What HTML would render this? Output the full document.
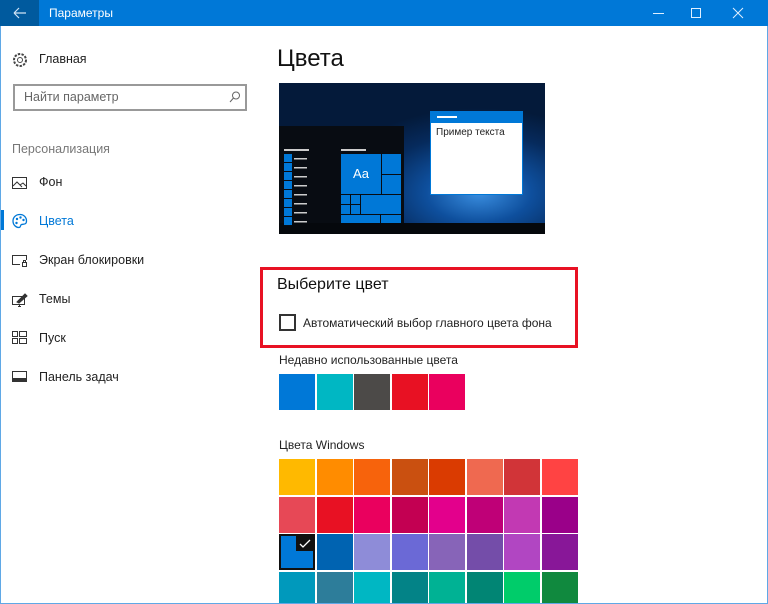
<!DOCTYPE html>
<html><head><meta charset="utf-8"><style>
*{margin:0;padding:0;box-sizing:border-box}
html,body{width:768px;height:604px;overflow:hidden}
body{background:#fff;font-family:"Liberation Sans","Noto Sans CJK SC",sans-serif;position:relative;color:#000}
.a{position:absolute}
.t{font-size:12.5px;white-space:nowrap}
.sw{position:absolute;width:36px;height:36px}
.ic{position:absolute;left:12px}
</style></head><body>
<div class="a" style="left:0;top:0;width:768px;height:26px;background:#0078d7"></div>
<div class="a" style="left:0;top:0;width:39px;height:26px;background:#005a9e"></div>
<svg class="a" style="left:12px;top:6px" width="16" height="14"><path d="M2 7H14M2 7L7 2M2 7L7 12" stroke="#cfe3f5" stroke-width="1.2" fill="none"/></svg>
<div class="a t" style="left:49px;top:6px;color:#fff;font-size:12px">Параметры</div>
<svg class="a" style="left:650px;top:6px" width="110" height="14"><path d="M3 7.5H14" stroke="#dfefff"/><rect x="41.5" y="2.5" width="9" height="9" stroke="#dfefff" fill="none"/><path d="M83 2L93 12M93 2L83 12" stroke="#dfefff"/></svg>

<svg class="a" style="left:12px;top:52px" width="16" height="16"><circle cx="8" cy="8" r="2.5" stroke="#444" fill="none"/><circle cx="8" cy="8" r="6" stroke="#444" stroke-dasharray="2.4 1.3" stroke-width="2" fill="none"/></svg>
<div class="a t" style="left:39px;top:52px;color:#222">Главная</div>
<div class="a" style="left:13px;top:84px;width:234px;height:27px;border:2px solid #999"></div>
<div class="a t" style="left:24px;top:90px;color:#666">Найти параметр</div>
<svg class="a" style="left:228px;top:90px" width="14" height="14"><circle cx="8" cy="5.5" r="3.5" stroke="#666" fill="none"/><path d="M5.5 8L2 12" stroke="#666"/></svg>
<div class="a t" style="left:12px;top:142px;color:#777">Персонализация</div>

<svg class="ic a" style="top:176px" width="16" height="14"><rect x="0.5" y="1.5" width="14" height="11" stroke="#333" fill="none"/><path d="M1 10L5 6L10 11M8 9L11 7L14 10" stroke="#333" fill="none"/></svg>
<div class="a t" style="left:39px;top:175px;color:#222">Фон</div>
<div class="a" style="left:0;top:210px;width:4px;height:20px;background:#0078d7"></div>
<svg class="ic a" style="top:213px" width="16" height="16"><path d="M8 1.5C3.5 1.5 1 4.5 1 8C1 12 4 14.5 7 14.5C9 14.5 8 12 9.5 11.5C11 11 14.5 12 14.5 8C14.5 4.5 12 1.5 8 1.5Z" stroke="#0078d7" stroke-width="1.3" fill="none"/><circle cx="5" cy="6" r="1.2" fill="#0078d7"/><circle cx="8.5" cy="4.5" r="1.2" fill="#0078d7"/><circle cx="11.5" cy="7" r="1.2" fill="#0078d7"/><circle cx="4.5" cy="10" r="1.2" fill="#0078d7"/></svg>
<div class="a t" style="left:39px;top:214px;color:#0078d7">Цвета</div>
<svg class="ic a" style="top:254px" width="16" height="14"><path d="M14.5 6V1.5H0.5V10.5H8" stroke="#333" fill="none"/><rect x="10.5" y="8.5" width="4" height="4" stroke="#333" fill="none"/><path d="M11.5 8.5V6.5H13.5V8.5" stroke="#333" fill="none"/></svg>
<div class="a t" style="left:39px;top:253px;color:#222">Экран блокировки</div>
<svg class="ic a" style="top:292px" width="16" height="16"><rect x="0.5" y="4.5" width="12" height="8" stroke="#333" fill="none"/><path d="M6 14.5H9M7.5 12.5V14.5M5 10L13 2L15 4L7 11Z" stroke="#333" fill="#333"/></svg>
<div class="a t" style="left:39px;top:292px;color:#222">Темы</div>
<svg class="ic a" style="top:331px" width="16" height="14"><rect x="0.5" y="0.5" width="5" height="5" stroke="#333" fill="none"/><rect x="7.5" y="0.5" width="7" height="5" stroke="#333" fill="none"/><rect x="0.5" y="7.5" width="5" height="5" stroke="#333" fill="none"/><rect x="7.5" y="7.5" width="7" height="5" stroke="#333" fill="none"/></svg>
<div class="a t" style="left:39px;top:331px;color:#222">Пуск</div>
<svg class="ic a" style="top:371px" width="16" height="12"><rect x="0.5" y="0.5" width="14" height="10" stroke="#333" fill="none"/><rect x="1" y="7" width="13" height="3" fill="#333"/></svg>
<div class="a t" style="left:39px;top:370px;color:#222">Панель задач</div>

<div class="a" style="left:277px;top:45px;font-size:24px;color:#111">Цвета</div>

<div class="a" style="left:279px;top:83px;width:266px;height:151px;background:radial-gradient(ellipse 150px 85px at 200px 110px,#3a8ee0 0%,#0e4f9d 35%,#062a5c 70%,#041a3a 100%);overflow:hidden">
 <div class="a" style="left:0;top:43px;width:125px;height:100px;background:#080c12"></div>
 <div class="a" style="left:0;top:140px;width:266px;height:11px;background:#05080c"></div>
 <div class="a" style="left:5px;top:66px;width:25px;height:2px;background:#ccc"></div>
 <div class="a" style="left:62px;top:66px;width:25px;height:2px;background:#ccc"></div>
 <div class="a" style="left:5px;top:71px;width:8px;height:72px;background:repeating-linear-gradient(#0078d7 0 8px,#080c12 8px 9px)"></div>
 <div class="a" style="left:15px;top:75px;width:13px;height:66px;background:repeating-linear-gradient(#ccc 0 1.5px,transparent 1.5px 9px)"></div>
 <div class="a" style="left:62px;top:71px;width:40px;height:40px;background:#0078d7;color:#fff;font-size:13px;text-align:center;line-height:40px">Aa</div>
 <div class="a" style="left:103px;top:71px;width:19px;height:20px;background:#0078d7"></div>
 <div class="a" style="left:103px;top:92px;width:19px;height:19px;background:#0078d7"></div>
 <div class="a" style="left:62px;top:112px;width:9px;height:9px;background:#0078d7"></div>
 <div class="a" style="left:72px;top:112px;width:9px;height:9px;background:#0078d7"></div>
 <div class="a" style="left:62px;top:122px;width:9px;height:9px;background:#0078d7"></div>
 <div class="a" style="left:72px;top:122px;width:9px;height:9px;background:#0078d7"></div>
 <div class="a" style="left:82px;top:112px;width:40px;height:19px;background:#0078d7"></div>
 <div class="a" style="left:62px;top:132px;width:39px;height:8px;background:#0078d7"></div>
 <div class="a" style="left:102px;top:132px;width:20px;height:8px;background:#0078d7"></div>
 <div class="a" style="left:151px;top:28px;width:93px;height:84px;background:#fff;border:1px solid #0078d7"></div>
 <div class="a" style="left:151px;top:28px;width:93px;height:12px;background:#0078d7"></div>
 <div class="a" style="left:158px;top:33px;width:20px;height:2px;background:#fff"></div>
 <div class="a" style="left:157px;top:44px;font-size:10px;color:#222;white-space:nowrap">Пример текста</div>
</div>

<div class="a" style="left:260px;top:267px;width:318px;height:81px;border:3px solid #e81123"></div>
<div class="a" style="left:277px;top:276px;font-size:16px;color:#111">Выберите цвет</div>
<div class="a" style="left:279px;top:314px;width:17px;height:17px;border:2px solid #333"></div>
<div class="a t" style="left:303px;top:316px;color:#222;font-size:12px">Автоматический выбор главного цвета фона</div>
<div class="a t" style="left:279px;top:353px;color:#222;font-size:12px">Недавно использованные цвета</div>
<div class="sw" style="left:279px;top:374px;background:#0078d7"></div>
<div class="sw" style="left:317px;top:374px;background:#00b7c3"></div>
<div class="sw" style="left:354px;top:374px;background:#4c4a48"></div>
<div class="sw" style="left:392px;top:374px;background:#e81123"></div>
<div class="sw" style="left:429px;top:374px;background:#ea005e"></div>
<div class="a t" style="left:279px;top:438px;color:#222;font-size:12px">Цвета Windows</div>

<div class="sw" style="left:279px;top:459px;background:#ffb900"></div>
<div class="sw" style="left:317px;top:459px;background:#ff8c00"></div>
<div class="sw" style="left:354px;top:459px;background:#f7630c"></div>
<div class="sw" style="left:392px;top:459px;background:#ca5010"></div>
<div class="sw" style="left:429px;top:459px;background:#da3b01"></div>
<div class="sw" style="left:467px;top:459px;background:#ef6950"></div>
<div class="sw" style="left:504px;top:459px;background:#d13438"></div>
<div class="sw" style="left:542px;top:459px;background:#ff4343"></div>

<div class="sw" style="left:279px;top:497px;background:#e74856"></div>
<div class="sw" style="left:317px;top:497px;background:#e81123"></div>
<div class="sw" style="left:354px;top:497px;background:#ea005e"></div>
<div class="sw" style="left:392px;top:497px;background:#c30052"></div>
<div class="sw" style="left:429px;top:497px;background:#e3008c"></div>
<div class="sw" style="left:467px;top:497px;background:#bf0077"></div>
<div class="sw" style="left:504px;top:497px;background:#c239b3"></div>
<div class="sw" style="left:542px;top:497px;background:#9a0089"></div>

<div class="sw" style="left:279px;top:534px;background:#0078d7;border:2px solid #111"></div>
<div class="a" style="left:296px;top:536px;width:17px;height:15px;background:#111"></div>
<svg class="a" style="left:298px;top:538px" width="14" height="11"><path d="M2 6L5 9L12 2" stroke="#fff" stroke-width="1.3" fill="none"/></svg>
<div class="sw" style="left:317px;top:534px;background:#0063b1"></div>
<div class="sw" style="left:354px;top:534px;background:#8e8cd8"></div>
<div class="sw" style="left:392px;top:534px;background:#6b69d6"></div>
<div class="sw" style="left:429px;top:534px;background:#8764b8"></div>
<div class="sw" style="left:467px;top:534px;background:#744da9"></div>
<div class="sw" style="left:504px;top:534px;background:#b146c2"></div>
<div class="sw" style="left:542px;top:534px;background:#881798"></div>

<div class="sw" style="left:279px;top:572px;height:31px;background:#0099bc"></div>
<div class="sw" style="left:317px;top:572px;height:31px;background:#2d7d9a"></div>
<div class="sw" style="left:354px;top:572px;height:31px;background:#00b7c3"></div>
<div class="sw" style="left:392px;top:572px;height:31px;background:#038387"></div>
<div class="sw" style="left:429px;top:572px;height:31px;background:#00b294"></div>
<div class="sw" style="left:467px;top:572px;height:31px;background:#018574"></div>
<div class="sw" style="left:504px;top:572px;height:31px;background:#00cc6a"></div>
<div class="sw" style="left:542px;top:572px;height:31px;background:#10893e"></div>

<div class="a" style="left:0;top:26px;width:1px;height:578px;background:#5fa8e6"></div>
<div class="a" style="left:767px;top:26px;width:1px;height:578px;background:#5fa8e6"></div>
<div class="a" style="left:0;top:603px;width:768px;height:1px;background:#5fa8e6"></div>
</body></html>
